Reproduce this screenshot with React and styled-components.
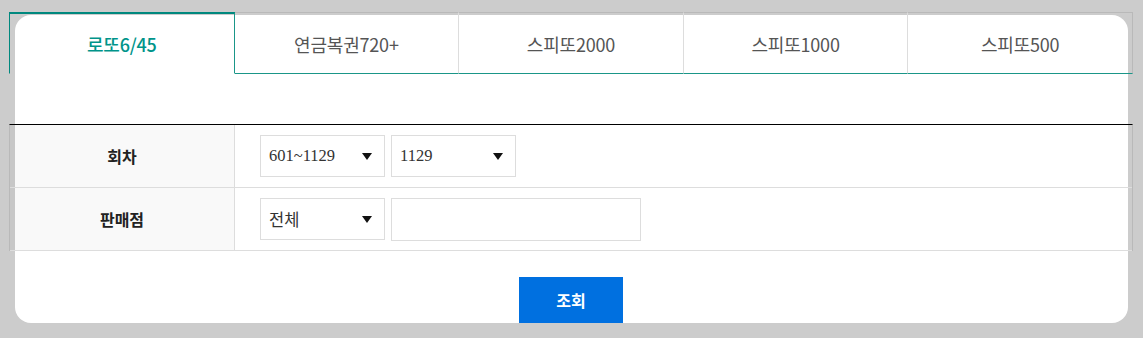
import styled, { createGlobalStyle } from "styled-components";

const GlobalStyle = createGlobalStyle`
  *, *::before, *::after {
    box-sizing: border-box;
    margin: 0;
    padding: 0;
  }

  body {
    background: #cccccc;
    font-family: "Noto Sans CJK KR", "Noto Sans", sans-serif;
  }
`;

const Page = styled.div`
  padding: 15px 15px 0 15px;
`;

const Card = styled.div`
  display: flow-root;
  background: #ffffff;
  border-radius: 16px;
`;

const Inner = styled.div`
  margin: -3px -5px -4px -6px;
`;

const Tabs = styled.ul`
  display: flex;
  list-style: none;
`;

const Tab = styled.li`
  flex: 1;
  height: 62px;
  display: flex;
  align-items: center;
  justify-content: center;
  font-size: 18px;
  letter-spacing: -0.2px;
  color: ${(p) => (p.$active ? "#00948a" : "#555555")};
  font-weight: ${(p) => (p.$active ? 500 : 400)};
  border-top: ${(p) => (p.$active ? "2px solid #00887e" : "1px solid #b9b9b9")};
  border-bottom: ${(p) => (p.$active ? "1px solid transparent" : "1px solid #1a9688")};
  border-left: ${(p) => (p.$active ? "1px solid #00887e" : "none")};
  border-right: ${(p) =>
    p.$active ? "1px solid #1a9688" : p.$last ? "1px solid #b9b9b9" : "1px solid #dddddd"};
  padding-top: ${(p) => (p.$active ? "0" : "1px")};
  cursor: pointer;
`;

const Spacer = styled.div`
  height: 50px;
`;

const Table = styled.div`
  border-top: 1px solid #000000;
  border-left: 1px solid #b9b9b9;
  border-right: 1px solid #b9b9b9;
`;

const Row = styled.div`
  display: grid;
  grid-template-columns: 225px 1fr;
  height: 63px;
  border-bottom: 1px solid #dddddd;
`;

const Label = styled.div`
  display: flex;
  align-items: center;
  justify-content: center;
  background: rgba(0, 0, 0, 0.025);
  border-right: 1px solid #dddddd;
  font-size: 16px;
  font-weight: 700;
  color: #222222;
`;

const Field = styled.div`
  display: flex;
  align-items: center;
  gap: 6px;
  padding-left: 25px;
`;

const Select = styled.div`
  width: 125px;
  height: 42px;
  border: 1px solid #dddddd;
  display: flex;
  align-items: center;
  justify-content: space-between;
  padding: 0 12px 0 8px;
  font-family: "Liberation Serif", "Noto Sans CJK KR", serif;
  font-size: 16.5px;
  color: #333333;
  background: #ffffff;
`;

const Arrow = styled.span`
  width: 0;
  height: 0;
  border-left: 5px solid transparent;
  border-right: 5px solid transparent;
  border-top: 7px solid #111111;
`;

const Input = styled.input`
  width: 250px;
  height: 43px;
  border: 1px solid #dddddd;
  outline: none;
  background: #ffffff;
`;

const Actions = styled.div`
  display: flex;
  justify-content: center;
  padding-top: 26px;
`;

const Button = styled.button`
  width: 104px;
  height: 50px;
  border: none;
  border-bottom: 4px solid #0a5bb8;
  background: #0070e0;
  color: #ffffff;
  font-family: "Noto Sans CJK KR", sans-serif;
  font-size: 16px;
  font-weight: 700;
  cursor: pointer;
`;

const tabs = ["로또6/45", "연금복권720+", "스피또2000", "스피또1000", "스피또500"];

function App() {
  return (
    <>
      <GlobalStyle />
      <Page>
        <Card>
          <Inner>
            <Tabs>
              {tabs.map((t, i) => (
                <Tab key={t} $active={i === 0} $last={i === tabs.length - 1}>
                  {t}
                </Tab>
              ))}
            </Tabs>
            <Spacer />
            <Table>
              <Row>
                <Label>회차</Label>
                <Field>
                  <Select>
                    601~1129
                    <Arrow />
                  </Select>
                  <Select>
                    1129
                    <Arrow />
                  </Select>
                </Field>
              </Row>
              <Row>
                <Label>판매점</Label>
                <Field>
                  <Select>
                    전체
                    <Arrow />
                  </Select>
                  <Input type="text" />
                </Field>
              </Row>
            </Table>
            <Actions>
              <Button>조회</Button>
            </Actions>
          </Inner>
        </Card>
      </Page>
    </>
  );
}

export default App;
